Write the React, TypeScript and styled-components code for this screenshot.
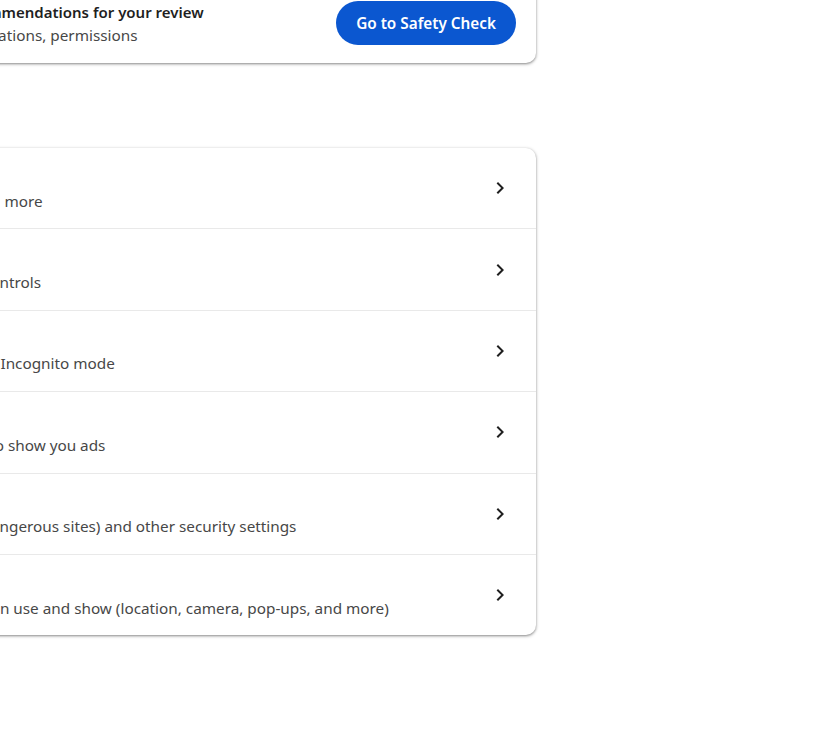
import styled, { createGlobalStyle } from 'styled-components';

const GlobalStyle = createGlobalStyle`
  html, body {
    margin: 0;
    padding: 0;
    background: #ffffff;
    overflow: hidden;
  }
  body {
    font-family: 'Noto Sans', 'Open Sans', 'Liberation Sans', sans-serif;
    color: #1f1f1f;
  }
`;

const rows = [
  { title: 'Delete browsing data', text: 'Delete history, cookies, cache, and more' },
  { title: 'Privacy Guide', text: 'Review key privacy and security controls' },
  { title: 'Third-party cookies', text: 'Third-party cookies are blocked in Incognito mode' },
  { title: 'Ad privacy', text: 'Customize the info used by sites to show you ads' },
  {
    title: 'Security',
    text: 'Safe Browsing (protection from dangerous sites) and other security settings',
  },
  {
    title: 'Site settings',
    text: 'Controls what information sites can use and show (location, camera, pop-ups, and more)',
  },
];

const Chevron = () => (
  <svg width='24' height='24' viewBox='0 0 24 24' fill='#1f1f1f'>
    <path d='M10 6 8.59 7.41 13.17 12l-4.58 4.59L10 18l6-6z' />
  </svg>
);

const App = () => {
  return (
    <Page>
      <GlobalStyle />
      <Column>
        <SafetyCard>
          <SafetyText>
            <Title $size={15} $line={24}>
              Chrome found some safety recommendations for your review
            </Title>
            <Secondary>Passwords, extensions, site notifications, permissions</Secondary>
          </SafetyText>
          <PrimaryButton>Go to Safety Check</PrimaryButton>
        </SafetyCard>
        <SectionHeading>Privacy and security</SectionHeading>
        <Card>
          {rows.map((r) => (
            <Row key={r.title}>
              <RowText>
                <Title $size={15.3} $line={24}>
                  {r.title}
                </Title>
                <Secondary>{r.text}</Secondary>
              </RowText>
              <Chevron />
            </Row>
          ))}
        </Card>
      </Column>
    </Page>
  );
};

const Page = styled.div`
  width: 815px;
  height: 734px;
  overflow: hidden;
`;

const Column = styled.div`
  width: 802px;
  margin-left: -266px;
  margin-top: -20px;
`;

const SafetyCard = styled.div`
  display: flex;
  align-items: center;
  background: #fff;
  border-radius: 10px;
  padding: 20px 20px 17px;
  box-shadow: 0 1px 2px rgba(0, 0, 0, 0.3), 0 1px 3px 1px rgba(0, 0, 0, 0.15);
`;

const SafetyText = styled.div`
  flex: 1;
  display: flex;
  flex-direction: column;
`;

const Title = styled.div<{ $size: number; $line: number }>`
  font-size: ${(p) => p.$size}px;
  font-weight: 600;
  line-height: ${(p) => p.$line}px;
  color: #1f1f1f;
  white-space: nowrap;
`;

const Secondary = styled.div`
  font-size: 15.3px;
  line-height: 22px;
  color: #474747;
  white-space: nowrap;
`;

const PrimaryButton = styled.button`
  height: 44px;
  padding: 0 20px;
  border: none;
  border-radius: 22px;
  background: #0b57d0;
  color: #fff;
  font-family: inherit;
  font-size: 15.3px;
  font-weight: 600;
  cursor: pointer;
`;

const SectionHeading = styled.h2`
  margin: 0;
  height: 85px;
  display: flex;
  align-items: center;
  font-size: 17px;
  font-weight: 400;
  color: #1f1f1f;
`;

const Card = styled.div`
  background: #fff;
  border-radius: 10px;
  box-shadow: 0 1px 2px rgba(0, 0, 0, 0.3), 0 1px 3px 1px rgba(0, 0, 0, 0.15);
`;

const Row = styled.div`
  display: flex;
  align-items: center;
  min-height: 80.4px;
  padding: 0 24px 0 20px;
  border-top: 1px solid #e9e9e9;
  cursor: pointer;

  &:first-child {
    border-top: none;
  }
`;

const RowText = styled.div`
  flex: 1;
  display: flex;
  flex-direction: column;
  padding-top: 1px;
`;

export default App;
